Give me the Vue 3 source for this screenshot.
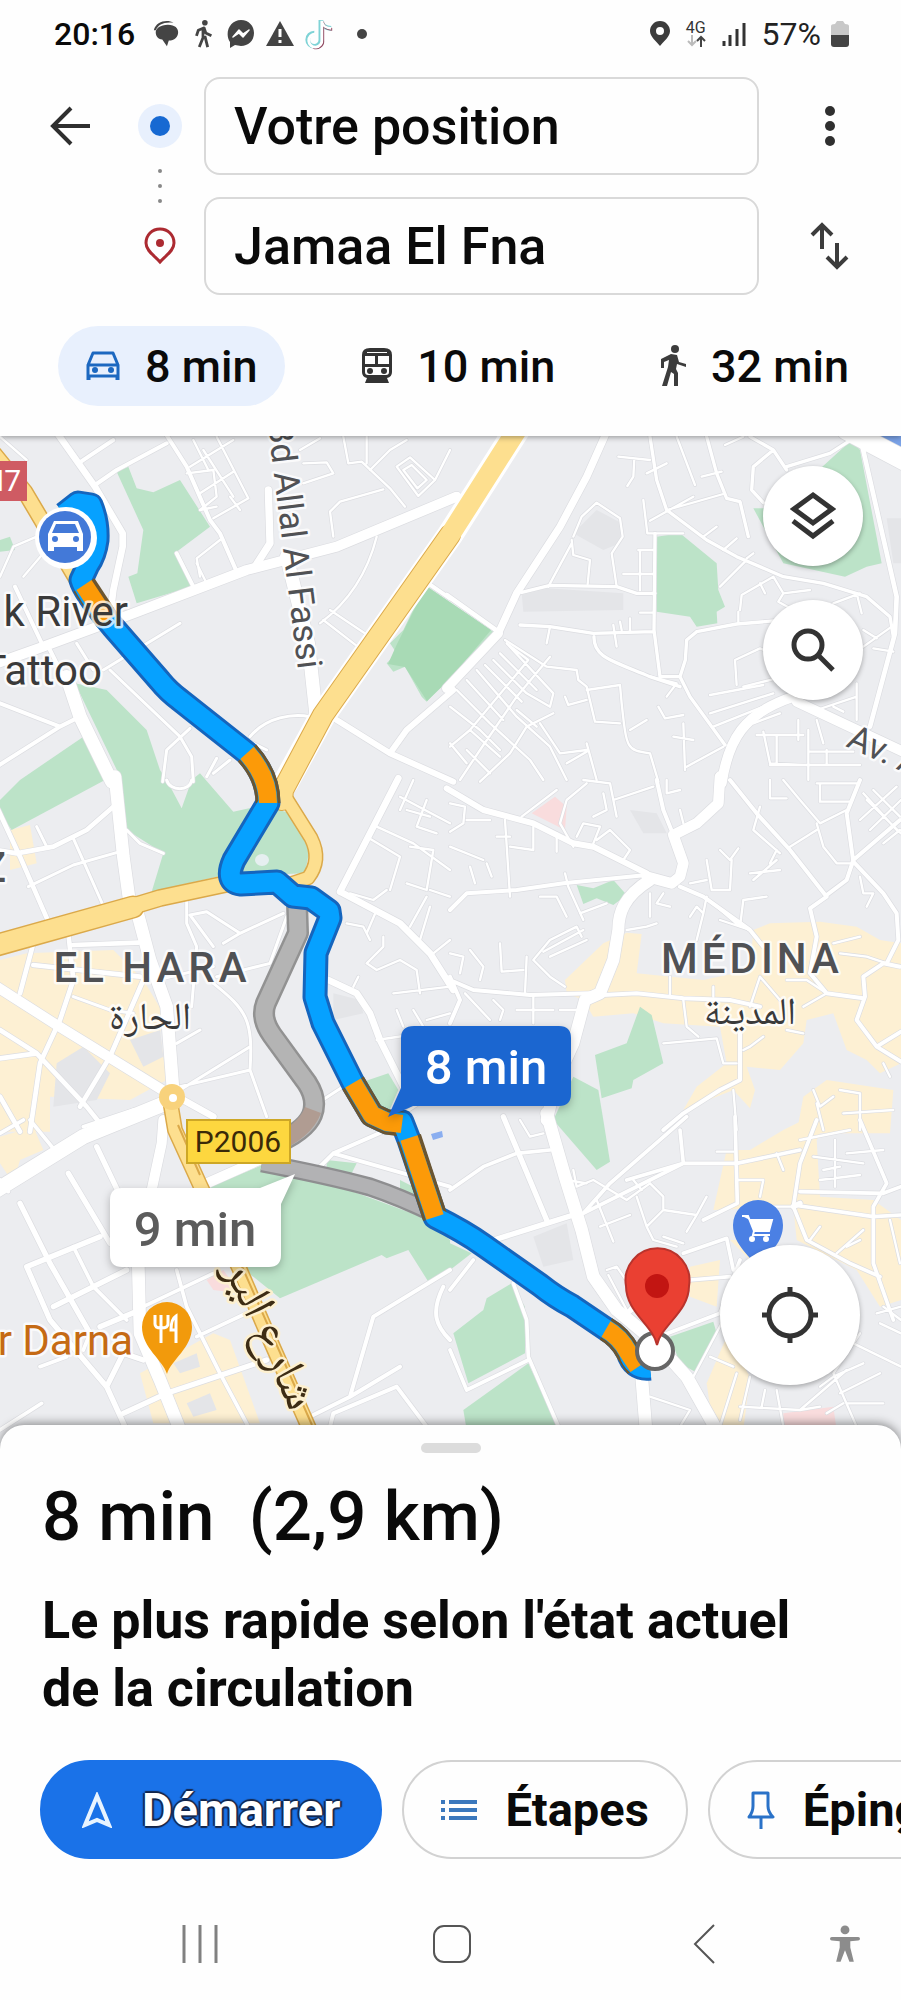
<script setup>
import { ref } from 'vue'

const origin = ref('Votre position')
const destination = ref('Jamaa El Fna')
const mode = ref('car')

const modes = [
  { id: 'car', time: '8 min' },
  { id: 'transit', time: '10 min' },
  { id: 'walk', time: '32 min' }
]

/* The base map is split in tiles, each drawn at three units per map pixel. */
const tiles = [
  {
    x: 0, y: 430,
    green: [
      'M350 125 L385 110 L410 175 L460 187 L540 150 L630 290 L530 365 L575 470 L410 520 L385 440 L412 430 L430 300 Z',
      'M1275 465 L1480 605 L1350 740 L1280 815 L1265 800 L1215 710 L1180 725 L1160 700 L1190 670 L1170 640 L1210 600 Z',
      'M0 330 L30 320 L45 360 L0 365 Z'
    ],
    sand: [], grey: [], red: [],
    roads: [
      [30, 'M-10 700 L130 650 L400 550 L740 420 L1010 350 L1370 200'],
      [20, 'M165 0 L285 170 L368 310 L368 350 L340 480 L330 560'],
      [40, 'M860 380 L925 640 L950 870 M200 740 L240 860 L335 1055'],
      [22, 'M805 180 L810 340 L765 410'],
      [18, 'M1010 870 L1170 970 L1360 1055 M1170 970 L1220 900 L1360 780'],
      [12, 'M285 165 L350 120 L500 40 M490 0 L560 110 L630 270 L660 310 L710 425 M1270 450 L1350 505 M45 470 L130 650 M0 820 L180 890 L240 860 M180 890 L-10 1010 M150 660 L205 770 M530 370 L580 470 M235 100 L340 30'],
      [7, 'M570 110 L700 30 M560 130 L640 120 L650 200 L600 240 M600 190 L700 125 M580 30 L625 120 M650 20 L745 205 L640 265 M690 200 L720 240 M600 240 L650 230 M610 60 L700 200 M910 100 L980 97 L1000 130 L910 160 M1030 20 L1045 100 L1085 95 L1170 175 L1215 230 M1100 20 L1100 100 M1000 320 L990 245 L1020 215 L1150 178 M1190 110 L1230 82 L1305 150 L1255 198 Z M1210 120 L1235 105 L1280 150 L1252 175 Z M1110 120 L1170 60 L1220 30 M1305 150 L1350 60 M1130 320 C1100 440 1040 520 960 580 M990 540 L1110 620 M970 570 L1080 655 M0 440 L40 350 L110 320 M70 440 L130 370 M0 20 L80 90 M900 60 L960 25 M600 440 L590 385 L660 330 M590 400 L615 450'],
      [9, 'M230 640 L280 720 M330 720 L540 920 L575 980 L580 1055 M310 720 L540 580 M570 895 L500 960 L488 1055 M750 920 C800 860 880 850 930 860 M620 1040 L650 985 M640 1030 L690 990 M740 930 L800 960']
    ]
  },
  {
    x: 450, y: 430,
    green: [
      'M620 320 L690 310 L800 400 L805 480 L825 530 L800 545 L802 580 L740 590 L720 560 L620 545 Z',
      'M910 235 L980 235 L1205 30 L1230 60 L1295 400 L1250 410 L1185 440 L1000 400 Z'
    ],
    sand: [],
    grey: ['M370 310 L440 240 L515 280 L510 340 L460 360 Z', 'M215 490 L290 475 L520 490 L520 540 L220 545 Z', 'M1310 265 L1353 265 L1353 400 L1330 400 Z'],
    red: [],
    roads: [
      [22, 'M468 10 L410 140 L330 290 L200 490 L145 610'],
      [28, 'M145 610 L-10 775'],
      [14, 'M-10 495 L145 605 M1235 40 L1340 500 M1340 500 L1335 610 L1260 890'],
      [60, 'M1190 0 L1370 95'],
      [30, 'M1030 800 C880 850 835 930 815 1060 M1040 815 L1370 970'],
      [10, 'M600 20 L620 150 L650 240 L770 330 L860 380 L1000 440 L1120 460 L1250 500 L1320 560 L1330 620 M770 20 L800 130 L830 205 L870 215 L895 320 M970 60 L910 110 L905 180 L940 218 M900 20 L970 60 L1010 120 M1010 110 L1140 70 L1210 25 M615 310 L612 600 L630 740 L690 740 M215 487 L300 466 L500 470 L560 490 L615 490 M210 585 L300 590 L430 610 L610 605 M740 605 L860 582 L980 572 M740 605 L710 630 L706 690 L690 740 L720 800 L825 945 M432 620 C430 680 480 690 600 740 L690 770'],
      [7, 'M680 20 L735 165 M505 80 L600 90 M553 85 L550 140 L532 168 M590 130 L650 100 M580 210 L592 310 L700 310 M600 272 L730 200 M650 240 L820 192 M755 140 L815 125 M825 45 L880 20 M370 375 L365 330 M370 320 L395 260 L440 218 L510 265 L518 320 L485 370 L500 470 M370 375 L420 390 L413 462 M295 470 L365 340 M565 360 H615 M570 360 V480 M520 432 H612 M570 548 H610 M490 585 L500 650 M510 575 L515 600 M540 565 V605 M760 320 L800 290 M820 360 L860 325 M890 385 L910 370 M810 470 L885 395 M870 540 L875 495 L970 440 L1000 490 L985 515 L1030 540 M865 580 V545 M930 460 L945 490 M1000 490 L1080 480 M1220 490 L1235 550 M1150 520 L1230 490 M165 630 L290 710 L380 720 L385 750 L410 770 L435 875 L510 880 M410 780 L510 765 L515 820 C530 960 530 960 600 970 L625 1055 M345 800 L355 825 L410 810 M540 900 L590 870 M625 830 L645 865 L700 855 M780 850 L970 790 M790 890 L940 830 M860 765 L855 690 L930 655 L990 680 M780 795 L940 765 M880 770 L980 745 M700 880 L705 1020 M670 920 L730 930 M710 1010 L820 950 M600 740 L680 760 L650 800 M910 880 L990 850 M920 915 H1060 M940 905 L960 1000 L1060 1005 M980 915 V1000 M1045 870 V930 M1075 900 V1050 M1080 965 H1210 M960 1005 H1230 M1100 870 L1120 940 M1130 960 V1005 M1240 650 L1325 590 M1240 600 L1280 625 M1270 655 L1330 665 M1220 760 V870 M1100 840 L1220 800 M1150 830 L1180 845 M300 590 L290 640'],
      [7, 'M130 690 L230 790 L300 830 L310 790 L170 640 M80 720 L200 860 L300 950 L350 1050 M20 780 L120 880 L240 990 L280 1050 M0 830 L90 900 L150 960 M50 750 L160 870 M105 705 L215 815 M150 670 L260 780 M170 640 L235 690 L60 900 L0 950 M300 680 L200 800 L90 960 L30 1050 M310 850 L230 890 L180 970 L90 1055 M270 880 L330 970 L410 960 M0 940 L50 1000 M60 900 L150 980 M50 960 L120 1030 M200 840 L260 890 M410 940 L440 1050 M350 1000 L410 965']
    ]
  },
  {
    x: 0, y: 780,
    green: [
      'M0 60 L60 0 L250 -130 L315 0 L35 150 L0 100 Z',
      'M225 -290 L320 -270 L440 -150 L480 -30 L500 0 L545 85 L575 0 L600 -20 L700 95 L790 75 L870 100 L930 200 L915 280 L650 290 L455 335 L490 220 L380 150 L365 0 Z',
      'M1090 905 L1165 880 L1195 930 L1160 1010 Z'
    ],
    sand: [
      'M0 540 L80 520 L340 510 L430 600 L490 700 L480 760 L500 900 L390 960 L150 950 L150 1055 H0 Z',
      'M30 150 L90 135 L110 250 L30 270 Z'
    ],
    grey: ['M170 850 L250 800 L330 880 L290 960 L160 980 Z', 'M390 780 L480 750 L490 830 L430 860 Z', 'M1000 640 L1080 660 L1090 700 L1000 720 Z'],
    red: [],
    roads: [
      [38, 'M345 -10 L370 230 L390 375 M410 390 L450 540 L500 680 L520 940'],
      [45, 'M520 960 L250 1070 L-10 1230'],
      [30, 'M-10 620 L170 735 L520 950'],
      [20, 'M550 960 L640 1010 M1195 -5 L1020 335 M1020 335 L1200 430 L1290 520 L1360 630 M985 600 L1070 640 L1110 700 L1140 780 L1215 930'],
      [14, 'M-5 90 L60 230 L145 425 M0 212 L50 220 L160 200 L260 150 L340 80 M100 490 L60 640 M205 460 L220 600 L180 720 L120 850 L90 1055 M430 600 L330 830 L240 980 M0 750 L110 820 L260 980 L320 1055 M0 835 L110 820 M0 950 L60 1055 M220 495 L415 488 M100 555 L420 590'],
      [9, 'M220 175 L310 378 M85 320 L220 255 L360 215 M110 140 L140 200 M380 150 L420 190 L490 220 M220 650 L330 690 L400 700 M560 350 L560 430 L590 500 L575 680 M570 405 L620 395 L720 460 L850 400 M570 405 L640 500 M720 460 L670 490 M860 410 L810 550 L650 590 M640 610 C740 690 760 720 750 870 L800 1010 M540 930 L750 800 M540 920 L750 870 M530 790 L600 750 M960 965 L1060 900 M1180 1020 L1350 910 M500 0 C510 35 570 35 575 0 M470 600 L640 560'],
      [7, 'M1200 50 L1350 130 M1130 140 L1240 190 L1350 270 M1240 0 L1200 90 M1280 60 L1250 140 L1310 160 M1100 170 L1200 230 L1170 330 M1230 200 L1300 210 L1280 330 L1220 310 M1290 330 L1350 350 M1220 90 L1290 110 M1050 340 L1120 360 L1160 330 M1040 430 L1090 440 L1110 480 M1100 460 L1130 390 M1150 470 L1150 500 L1100 550 L1130 570 L1200 540 L1250 570 L1260 640 M1180 640 L1350 620 M1130 780 L1230 765 M1190 690 L1210 740 M1240 690 L1270 740 M1280 720 L1350 700 M1060 620 L1075 590 M1290 380 L1260 480 M1230 440 L1280 350 M1300 520 L1350 480']
    ]
  },
  {
    x: 450, y: 780,
    green: [
      'M380 315 L430 325 L490 300 L530 345 L490 375 L440 355 L400 372 Z',
      'M435 825 L530 790 L570 680 L605 705 L640 850 L550 900 L545 925 L455 955 Z',
      'M370 890 L445 930 L460 1020 L480 1145 L440 1170 L310 1020 Z'
    ],
    sand: [
      'M345 600 L460 490 L530 458 L575 462 L560 580 L760 600 L900 570 L910 450 L960 430 L1110 425 L1220 440 L1290 480 L1353 490 V850 L1290 880 L1250 840 L1190 810 L1150 700 L1070 720 L1060 790 L990 870 L890 860 L915 930 L900 985 L850 930 L700 990 L740 920 L830 850 L810 740 L640 730 L550 700 L430 710 L400 660 L350 640 Z',
      'M1060 950 L1130 900 L1330 930 L1320 1060 L1040 1060 Z'
    ],
    grey: ['M540 90 L620 100 L650 160 L580 160 Z'],
    red: ['M245 100 L315 50 L350 80 L345 150 Z'],
    roads: [
      [32, 'M810 -10 L805 70 L740 130 L670 165 L700 250 L690 290 L665 310 L590 290'],
      [36, 'M600 300 C520 350 505 400 505 450 L490 540 L450 640 L405 660 L370 790 L320 900 L290 1020'],
      [18, 'M-10 25 L100 90 L250 130 L370 190 L430 200 L590 280'],
      [12, 'M0 390 L50 340 L200 330 L340 310 L590 285 M690 320 L760 350 L900 450 L940 500 M0 600 L70 630 L240 645 L420 640 M460 645 L560 640 L700 655 L840 660 L930 680 M0 590 L30 660 L0 730 M620 0 L640 90 L670 165 M840 0 L920 100 L1020 210 L1130 350 L1080 385 L1100 470 L1080 580 L1130 640 L1240 655 M1130 345 L1190 300 L1210 240 L1350 120 M1210 245 L1190 100 L1230 0 M1210 245 L1300 340 L1340 400 L1345 480 L1310 550 M1350 560 L1300 550 L1240 590 L1245 650 L1220 720 L1280 800 L1353 755 M1280 800 L1353 845 M870 760 L870 900 L810 930 L700 1000 L640 1050'],
      [7, 'M370 200 L330 130 L350 60 L410 10 M215 110 L320 30 M165 120 L180 350 M180 200 L250 210 L250 140 M140 170 H180 M320 160 V215 M50 120 H120 M0 70 L45 80 L40 130 L0 155 M0 200 L100 240 M60 260 L75 310 M110 250 L125 290 M270 350 L320 350 L350 410 M345 280 L355 320 L400 420 M250 540 L300 590 L345 620 M250 540 L300 480 L380 440 L395 470 M230 530 L225 640 M150 490 L155 575 L220 570 M390 400 L470 370 M300 530 L410 480 M280 515 L400 450 M530 450 L590 440 L620 430 M600 340 V410 M640 340 L620 370 L660 380 M740 480 L760 400 L770 350 M720 410 L740 380 L760 400 M770 240 L785 330 L840 330 L845 240 M810 210 L840 240 L865 205 M720 310 L770 300 M800 380 L870 440 L880 360 L950 350 M810 420 L900 450 M900 280 L990 270 M910 300 L980 240 M930 80 L910 150 L990 220 M980 210 L960 250 M1100 130 L1120 200 L1160 250 H1210 M1000 0 L1050 60 L1110 130 L1190 90 M1020 200 L1100 150 M960 0 V55 H1010 M1250 60 L1353 160 M1100 10 H1220 M1110 10 V65 H1200 M1240 40 L1340 150 M1270 30 L1350 110 M1230 120 L1340 20 M1260 150 L1353 60 M1300 190 L1350 150 M1230 290 L1240 340 L1270 340 L1250 380 M1170 520 L1250 530 L1310 550 M1150 490 L1230 470 M1300 850 L1320 890 M930 590 L900 680 M930 590 L990 660 M1010 600 L1070 600 L1130 640 L1060 680 M640 790 L800 775 L820 850 L860 850 M700 660 L710 740 L745 770 M660 590 V650 M790 620 V650 M880 810 L900 800 L940 770 M850 930 L860 1050 M1100 970 L1120 1050 M1090 930 L1110 980 L1150 950 M1170 930 L1230 940 L1230 1050 M1180 1000 L1330 990 M250 645 V730 M200 690 H310 M130 660 L160 690 L150 720 M330 690 H410 M45 640 L120 720 M0 520 L40 530 L30 580 M60 510 L100 560 L90 600 M380 170 L400 130 L450 140 L430 190 M430 110 L470 90 L460 40 M440 180 L480 150 L540 210 L520 240 M400 0 L480 10 L500 110 M490 60 L610 20 M650 0 V40 L690 30 M700 130 L690 90 M1010 750 L1060 760']
    ]
  },
  {
    x: 0, y: 1120,
    green: [
      'M630 200 L800 130 L1020 200 L1290 300 L1350 360 V450 L1285 485 L1225 390 L1160 415 L1145 405 L840 535 L760 470 L700 430 Z',
      'M980 120 L1070 130 L1050 170 L980 150 Z',
      'M1200 180 L1240 200 L1250 240 L1200 215 Z'
    ],
    sand: ['M0 50 L100 20 L130 90 L60 120 L40 190 L0 130 Z', 'M420 760 L640 640 L690 660 L780 910 L460 910 Z'],
    grey: ['M520 730 L590 700 L600 740 L540 760 Z', 'M560 850 L630 820 L650 870 L580 890 Z'],
    red: ['M620 480 L670 450 L720 520 L640 510 Z'],
    roads: [
      [38, 'M415 440 L420 640 L480 780 L540 930'],
      [30, 'M490 0 L485 70 L455 210 M620 190 L800 110'],
      [16, 'M205 160 L330 370 M290 80 L400 310 M60 250 L150 430 L270 640 M80 440 L300 350 M80 440 L150 600 L320 800 L375 920 M160 560 L380 450 M300 620 L420 570 M320 800 L370 700 L430 720 M370 880 L500 820 L800 720'],
      [11, 'M90 0 L180 110 M0 40 L70 0 M220 380 L280 500 L380 600 M530 450 L560 560 L660 760 L745 920 M430 560 L640 460 M590 650 L760 570 M120 740 L200 710 M125 850 L0 930 M0 180 L25 215 M250 20 L400 -30 M270 640 L250 690'],
      [12, 'M1350 450 L1120 590 L1050 830 L940 885 M990 920 L1000 880 L1190 800 L1280 920 M1050 830 L1200 740 M1330 500 C1290 580 1310 620 1350 660 M950 150 L1000 100 L1160 30 M1000 100 L1350 200']
    ]
  },
  {
    x: 450, y: 1120,
    green: [
      'M10 640 L100 570 L110 535 L185 490 L225 560 V700 L55 790 Z',
      'M40 870 L235 730 L330 930 H50 Z',
      'M660 650 L790 605 L800 640 L735 755 L690 730 Z',
      'M0 370 L65 400 L0 450 Z'
    ],
    sand: [
      'M790 270 L830 90 L900 90 L1000 30 L1060 0 L1130 0 L1100 60 L1110 230 L1270 240 L1353 300 L1353 540 L1290 560 L1220 450 L1040 360 L1030 260 Z',
      'M720 440 L810 420 L800 560 L720 530 Z',
      'M770 790 L830 650 L900 770 L880 930 L790 930 Z',
      'M840 360 H940 L900 420 Z'
    ],
    grey: ['M250 350 L350 310 L370 420 L280 440 Z'],
    red: ['M1000 880 L1150 860 L1160 930 H1000 Z'],
    roads: [
      [38, 'M290 -20 L345 170 L395 330 L430 470 L500 570 L620 670 L710 770 L800 930 M575 770 L588 930'],
      [16, 'M160 -10 L290 300 M100 370 L290 310 L370 285 M1050 250 L1030 260'],
      [11, 'M0 210 L100 140 L200 100 L300 90 M400 280 L480 190 L710 -10 M690 30 L700 130 M530 180 L700 130 L860 130 L1050 90 M400 280 L600 180 L700 130 M855 -10 L862 250 L760 300 M190 490 L230 600 L235 710 L330 930 M0 690 L50 810 L235 720 M0 510 L70 420 M520 590 L640 500 L720 480 L840 470 M640 645 L810 580 L870 420 M700 400 L830 355 L850 450 M1100 0 L1050 130 L1030 260 L1070 360 L1200 430 L1290 470 M1230 0 L1310 190 L1270 260 L1270 430 L1330 600 M1030 255 L1270 290 L1353 285 M1050 215 L1300 220 L1353 200'],
      [7, 'M210 0 L240 50 L280 40 M370 150 L380 200 L430 180 L530 240 L600 190 M350 180 L410 190 M440 240 L490 365 M450 320 L540 285 M560 230 L590 320 L640 270 L740 285 L710 335 M600 190 L640 230 L640 270 M590 320 L610 360 L680 380 M640 350 L700 370 M470 450 L500 440 L570 540 M475 465 L530 570 M550 180 L575 210 M740 285 L770 230 M820 600 L730 770 M780 710 L850 740 M860 760 L810 920 M945 810 L935 860 M870 860 L1050 870 L1190 750 M980 810 L1000 920 M900 770 L870 900 M1230 640 L1150 760 L1220 920 M1210 670 L1353 740 M1150 770 L1240 730 M1170 820 L1290 760 M1190 850 L1300 850 M1130 880 L1180 850 M1050 60 L1200 30 M1090 110 L1240 130 M1110 180 L1230 165 M1155 60 V200 M1120 150 L1170 140 M1190 100 L1300 90 M970 260 H1030 M860 180 L940 180 L930 230 M800 95 H850 M980 100 L1000 150 M1320 300 L1350 430 M1080 360 L1110 320 M1160 400 L1240 330 M1190 380 L1230 360 M1300 560 L1353 600 M1290 610 L1353 640 M1280 580 L1353 560 M560 540 L520 590 M600 830 L720 870 L690 920 M1050 870 L1110 860 M1110 800 L1150 770']
    ]
  }
]

const route = 'M64 514 L78 503 L91 505 Q98 522 97 540 Q95 555 88 565 L81 580 Q84 592 113 627 L160 681 Q168 691 180 700 L247 753 Q268 776 268 803 L234 860 Q224 882 241 884 L277 882 L293 896 L311 898 L329 911 L330 918 L316 953 L315 997 L323 1023 L353 1083 L372 1115 L387 1122 L402 1122 L409 1140 L435 1217 Q465 1232 483 1245 L540 1285 Q555 1297 572 1306 L606 1329 Q620 1337 628 1352 Q633 1370 650 1368'
const slowParts = [
  'M84 585 L107 620',
  'M247 753 Q268 776 268 803',
  'M353 1083 L372 1115 L387 1122 L402 1124',
  'M409 1138 L435 1217',
  'M606 1329 Q620 1337 628 1352 L638 1367'
]
const altRoute = 'M297 903 L298 933 L266 1003 Q260 1018 272 1035 L307 1083 Q318 1100 312 1115 Q305 1132 270 1146'
const altRoute2 = 'M262 1163 Q330 1176 370 1187 Q400 1197 435 1214'
</script>

<template>
  <main class="phone">
    <header class="top">
      <div class="status">
        <div class="status-side">
          <span class="clock">20:16</span>
          <svg class="s-icon" viewBox="0 0 30 30" aria-hidden="true"><path d="M2 11C4 1 17 -1 23 3C12 2 7 5 4 11Z" fill="#444" /><path d="M17 5C25 5 28 9 28 13C28 18 24 22 18 22L16 28L11 21C6 20 4 17 4 13C4 9 9 5 17 5Z" fill="#444" /></svg>
          <svg class="s-icon" viewBox="0 0 30 32" aria-hidden="true"><circle cx="17" cy="4" r="3" fill="#444" /><path d="M17 9L10 12L8 18M16 9L18 15L24 18M15 11L15 20L11 30M17 18L20 30" stroke="#444" stroke-width="3" fill="none" stroke-linejoin="round" /></svg>
          <svg class="s-icon wide" viewBox="0 0 30 30" aria-hidden="true"><path d="M15 1C23 1 28 7 28 14C28 22 22 27 15 27L9 26L4 29L4 23C-2 14 4 1 15 1Z" fill="#444" /><path d="M7 18L13 11L17 15L23 11L17 18L13 14Z" fill="#fff" stroke="#fff" stroke-width="1.5" stroke-linejoin="round" /></svg>
          <svg class="s-icon wide" viewBox="0 0 30 30" aria-hidden="true"><path d="M15 2L29 27H1Z" fill="#444" /><path d="M15 10V18M15 21V24" stroke="#fff" stroke-width="3" /></svg>
          <svg class="s-icon wide" viewBox="0 0 30 34" aria-hidden="true"><g fill="none" stroke-width="5"><path d="M17 2V23A7 7 0 1 1 10 16M17 3C18 8 22 11 28 11" stroke="#7fd3d6" /><path d="M19 4V24A7 7 0 0 1 9 31M19 6C21 10 24 12 29 12" stroke="#8f4860" stroke-width="3" /><path d="M18 3V23A7 7 0 1 1 11 17M18 4C19 8 23 11 28 11" stroke="#fff" stroke-width="3" /></g></svg>
          <span class="more-dot"></span>
        </div>
        <div class="status-side right">
          <svg class="loc" viewBox="0 0 20 26" aria-hidden="true"><path fill-rule="evenodd" d="M10 0C16 0 20 5 20 10C20 16 13 21 10 25C7 21 0 16 0 10C0 5 4 0 10 0ZM10 6A4 4 0 1 0 10 14A4 4 0 1 0 10 6Z" fill="#3c3c3c" /></svg>
          <span class="net"><span>4G</span>
            <svg viewBox="0 0 20 12" width="20" height="12" aria-hidden="true"><path d="M6 0V10M2 6L6 10L10 6" stroke="#bbb" stroke-width="2" fill="none" /><path d="M15 12V2M11 6L15 2L19 6" stroke="#444" stroke-width="2" fill="none" /></svg>
          </span>
          <svg class="bars" viewBox="0 0 24 24" aria-hidden="true"><path d="M2 19V24M8 13V24M15 7V24M22 1V24" stroke="#333" stroke-width="3" /></svg>
          <span class="battery-text">57%</span>
          <svg class="battery" viewBox="0 0 18 26" aria-hidden="true"><path d="M0 5Q0 3 4 3L6 0H12L14 3Q18 3 18 5V14H0Z" fill="#c8c8c8" /><path d="M0 14H18V23Q18 26 15 26H3Q0 26 0 23Z" fill="#444" /></svg>
        </div>
      </div>

      <form class="trip" @submit.prevent>
        <button type="button" class="icon-btn back" aria-label="Retour">
          <svg width="40" height="40" viewBox="0 0 40 40"><path d="M40 20H3M21 2L3 20L21 38" fill="none" stroke="#2f2f2f" stroke-width="4" /></svg>
        </button>
        <svg class="here" width="44" height="44" viewBox="0 0 44 44" aria-hidden="true"><circle cx="22" cy="22" r="22" fill="#e8f0fd" /><circle cx="22" cy="22" r="10" fill="#1769d2" /></svg>
        <input v-model="origin" class="place" type="text" aria-label="Point de départ">
        <button type="button" class="icon-btn" aria-label="Plus d'options">
          <svg width="12" height="42" viewBox="0 0 12 42"><g fill="#2f2f2f"><circle cx="6" cy="6" r="5" /><circle cx="6" cy="21" r="5" /><circle cx="6" cy="36" r="5" /></g></svg>
        </button>
        <svg class="dots" width="6" height="36" viewBox="0 0 6 36" aria-hidden="true"><g fill="#888"><circle cx="3" cy="3" r="2" /><circle cx="3" cy="18" r="2" /><circle cx="3" cy="33" r="2" /></g></svg>
        <svg class="goal" width="32" height="38" viewBox="0 0 32 38" aria-hidden="true"><path d="M16 2C24 2 30 8 30 16C30 24 21 29 16 35C11 29 2 24 2 16C2 8 8 2 16 2Z" fill="none" stroke="#ac2a31" stroke-width="3" /><circle cx="16" cy="16" r="4" fill="#ac2a31" /></svg>
        <input v-model="destination" class="place" type="text" aria-label="Destination">
        <button type="button" class="icon-btn" aria-label="Inverser les adresses">
          <svg width="40" height="50" viewBox="0 0 40 50"><path d="M12 28V4M2 14L12 4L22 14M27 22V46M17 36L27 46L37 36" fill="none" stroke="#3c3c3c" stroke-width="4" /></svg>
        </button>
      </form>

      <nav class="modes" aria-label="Moyen de transport">
        <button v-for="m in modes" :key="m.id" type="button" class="mode" :class="{ active: mode === m.id }" @click="mode = m.id">
          <svg v-if="m.id === 'car'" width="34" height="30" viewBox="0 0 34 30" aria-hidden="true"><path d="M2 29V14L7 2H27L32 14V29M2 14H32M2 25H32M3 26V29M31 26V29" fill="none" stroke="#1c68c0" stroke-width="3" stroke-linejoin="round" /><circle cx="9" cy="19" r="3" fill="#1c68c0" /><circle cx="25" cy="19" r="3" fill="#1c68c0" /></svg>
          <svg v-else-if="m.id === 'transit'" width="30" height="36" viewBox="0 0 30 36" aria-hidden="true"><path fill-rule="evenodd" d="M8 0H22Q30 0 30 7V24Q30 29 25 30L27 35H3L5 30Q0 29 0 24V7Q0 0 8 0ZM3 8V16H13V8ZM16 8V16H27V8ZM3 19V24Q3 27 6 27H24Q27 27 27 24V19ZM5 4V5H25V4Z" fill="#333" /><circle cx="8" cy="23" r="3" fill="#333" /><circle cx="22" cy="23" r="3" fill="#333" /></svg>
          <svg v-else width="26" height="42" viewBox="0 0 26 42" aria-hidden="true"><circle cx="15" cy="4" r="4" fill="#3c3c3c" /><path d="M11 9L17 10L19 17L26 19V22L17 19L16 24L18 28V41H14V29L11 27L7 41H2L8 22L9 15L4 17V23H1V14Z" fill="#3c3c3c" /></svg>
          <span>{{ m.time }}</span>
        </button>
      </nav>
    </header>

    <section class="map" aria-label="Carte de l'itinéraire">
      <svg class="canvas" viewBox="0 436 901 1014">
        <rect x="0" y="436" width="901" height="1014" fill="#ecedf0" />
        <g v-for="(t, i) in tiles" :key="'a' + i" :transform="`translate(${t.x} ${t.y}) scale(.33333)`">
          <path v-for="d in t.sand" :key="d" :d="d" fill="#fdf0d3" />
          <path v-for="d in t.grey" :key="d" :d="d" fill="#e4e5e8" />
          <path v-for="d in t.red" :key="d" :d="d" fill="#f9dcdd" />
          <path v-for="d in t.green" :key="d" :d="d" fill="#bce3c8" />
        </g>
        <path d="M426 586 L491 630 L450 679 L427 701 L405 667 L388 664 L397 644 L404 630 Z" fill="#a8dab5" />
        <path d="M878 436 H901 V450 Z" fill="#7ba3e8" />
        <g v-for="(t, i) in tiles" :key="'c' + i" :transform="`translate(${t.x} ${t.y}) scale(.33333)`" class="lines">
          <path v-for="r in t.roads" :key="r[1]" :d="r[1]" stroke="#dcdde1" :stroke-width="r[0] + 4" />
        </g>
        <g v-for="(t, i) in tiles" :key="'r' + i" :transform="`translate(${t.x} ${t.y}) scale(.33333)`" class="lines">
          <path v-for="r in t.roads" :key="r[1]" :d="r[1]" stroke="#fff" :stroke-width="r[0]" />
        </g>

        <g class="lines">
          <path d="M520 425 L450 535 L323 715 L286 782" stroke="#fff" stroke-width="26" />
          <g stroke="#dba94a">
            <path d="M450 535 L323 715 L283 790 L282 800" stroke-width="22" />
            <path d="M284 795 L311 838 Q322 860 308 878 L290 884" stroke-width="15" />
            <path d="M-10 947 L133 907" stroke-width="23" />
            <path d="M120 910 L160 898 L235 882" stroke-width="18" />
            <path d="M-5 455 L25 492 L80 585" stroke-width="17" />
            <path d="M170 1100 L175 1130 L200 1185 L240 1270 L270 1340 L312 1435" stroke-width="16" />
          </g>
          <g stroke="#fddf8f">
            <path d="M520 425 L450 535 L323 715 L283 790 L282 800" stroke-width="20" />
            <path d="M284 795 L311 838 Q322 860 308 878 L290 884" stroke-width="12" />
            <path d="M-10 947 L133 907" stroke-width="20" />
            <path d="M120 910 L160 898 L235 882" stroke-width="15" />
            <path d="M-5 455 L25 492 L80 585" stroke-width="14" />
            <path d="M170 1100 L175 1130 L200 1185 L240 1270 L270 1340 L312 1435" stroke-width="13" />
          </g>
        </g>
        <circle cx="172" cy="1097" r="13" fill="#f8d27c" /><circle cx="173" cy="1098" r="4" fill="#fff" />
        <path d="M178 1125 L200 1175 M240 1262 L312 1425" stroke="#dba94a" stroke-width="2" fill="none" />
        <path d="M431 1134 L442 1131 L443 1137 L433 1140 Z" fill="#8aaef0" />
        <ellipse cx="262" cy="860" rx="7" ry="6" fill="#e6eff0" />

        <g class="flat">
          <path :d="altRoute" stroke="#929292" stroke-width="22" />
          <path :d="altRoute" stroke="#b4b4b4" stroke-width="17" />
          <path d="M313 1110 Q305 1132 270 1146" stroke="#b09c92" stroke-width="17" />
          <path :d="altRoute2" stroke="#8e8e90" stroke-width="19" />
          <path :d="altRoute2" stroke="#b2b2b4" stroke-width="14" />
          <path :d="route" stroke="#1565bd" stroke-width="25" />
          <path v-for="d in slowParts" :key="d" :d="d" stroke="#6b5530" stroke-width="25" />
          <path :d="route" stroke="#06a1ff" stroke-width="19" />
          <path v-for="d in slowParts" :key="'s' + d" :d="d" stroke="#fc9a08" stroke-width="18" />
        </g>

        <g class="label">
          <text x="128" y="626" text-anchor="end" class="poi">k River</text>
          <text x="102" y="685" text-anchor="end" class="poi">Tattoo</text>
          <text x="133" y="1355" text-anchor="end" class="poi food">r Darna</text>
          <text x="10" y="882" text-anchor="end" class="district">Z</text>
          <text x="152" y="982" text-anchor="middle" class="district">EL HARA</text>
          <text x="752" y="973" text-anchor="middle" class="district">MÉDINA</text>
          <text x="150" y="1029" text-anchor="middle" class="arabic">الحارة</text>
          <text x="750" y="1024" text-anchor="middle" class="arabic">المدينة</text>
          <text transform="translate(298 670) rotate(83)" text-anchor="end" class="street">Bd Allal Al Fassi</text>
          <text transform="translate(845 746) rotate(24)" class="street">Av. A</text>
          <text transform="translate(257 1340) rotate(65)" text-anchor="middle" class="arabic road">شارع الير</text>
        </g>

        <rect x="-20" y="461" width="47" height="40" fill="#cf5b63" />
        <text x="21" y="491" text-anchor="end" class="shield white">N7</text>
        <rect x="187" y="1120" width="103" height="43" fill="#fdd73f" stroke="#cda726" stroke-width="2" />
        <text x="238" y="1152" text-anchor="middle" class="shield">P2006</text>

        <g class="bubble">
          <path d="M122 1188 H260 L295 1174 L281 1204 V1255 Q281 1267 269 1267 H122 Q110 1267 110 1255 V1200 Q110 1188 122 1188 Z" fill="#fff" />
          <text x="195" y="1246" text-anchor="middle" class="time">9 min</text>
          <path d="M414 1026 H559 Q571 1026 571 1038 V1094 Q571 1106 559 1106 H413 L388 1117 L401 1088 V1038 Q401 1026 414 1026 Z" fill="#1b66d0" />
          <text x="486" y="1084" text-anchor="middle" class="time white">8 min</text>
        </g>

        <circle cx="66" cy="538" r="31" fill="#fff" /><circle cx="65" cy="537" r="26" fill="#4379d8" />
        <path fill-rule="evenodd" d="M48 551V534L54 521H78L83 534V551H77V547H54V551ZM52 533H79L75 524H56Z" fill="#fff" />
        <circle cx="55" cy="539" r="3" fill="#4379d8" /><circle cx="76" cy="539" r="3" fill="#4379d8" />

        <path d="M167 1374C163 1360 142 1348 142 1327A25 25 0 1 1 192 1327C192 1348 171 1360 167 1374Z" fill="#f29a0c" />
        <path d="M155 1315V1324Q155 1328 161 1328Q168 1328 168 1324V1315M161 1315V1343M176 1343V1316Q171 1319 171 1330H176" fill="none" stroke="#fff" stroke-width="3" />

        <path d="M758 1270C752 1256 733 1246 733 1225A25 25 0 1 1 783 1225C783 1246 764 1256 758 1270Z" fill="#4b80e4" />
        <path d="M742 1216H748L754 1231H769L772 1220H750" fill="#fff" stroke="#fff" stroke-width="2" /><path d="M754 1231L753 1235H770" fill="none" stroke="#fff" stroke-width="2" />
        <circle cx="752" cy="1239" r="3" fill="#fff" /><circle cx="766" cy="1239" r="3" fill="#fff" />

        <circle cx="655" cy="1351" r="18" fill="#fff" stroke="#666" stroke-width="4" />
        <path d="M657 1345C653 1325 626 1312 626 1286A32 32 0 1 1 689 1286C689 1312 661 1325 657 1345Z" fill="#ea4032" stroke="#b9332c" stroke-width="2" />
        <circle cx="657" cy="1286" r="12" fill="#c21512" />
      </svg>

      <button type="button" class="fab layers" aria-label="Calques">
        <svg width="46" height="50" viewBox="0 0 46 50"><path d="M23 4L42 18L23 32L4 18ZM3 30L23 45L43 30" fill="none" stroke="#333" stroke-width="5" /></svg>
      </button>
      <button type="button" class="fab search" aria-label="Rechercher">
        <svg width="46" height="46" viewBox="0 0 46 46"><circle cx="18" cy="18" r="14" fill="none" stroke="#333" stroke-width="5" /><path d="M28 28L43 43" stroke="#333" stroke-width="5" /></svg>
      </button>
      <button type="button" class="fab locate" aria-label="Ma position">
        <svg width="56" height="56" viewBox="0 0 56 56"><circle cx="28" cy="28" r="21" fill="none" stroke="#333" stroke-width="5" /><path d="M28 0V8M28 48V56M0 28H8M48 28H56" stroke="#333" stroke-width="5" /></svg>
      </button>
    </section>

    <section class="sheet">
      <div class="handle"></div>
      <h1>8 min&nbsp; (2,9 km)</h1>
      <p>Le plus rapide selon l'état actuel de la circulation</p>
      <div class="actions">
        <button type="button" class="action primary">
          <svg width="30" height="36" viewBox="0 0 30 36" aria-hidden="true"><path d="M15 4L27 33L15 28L3 33Z" fill="none" stroke="#e8f4ff" stroke-width="4" /></svg>
          <span>Démarrer</span>
        </button>
        <button type="button" class="action">
          <svg width="36" height="22" viewBox="0 0 36 22" aria-hidden="true"><path d="M0 3H4M8 3H36M0 11H4M8 11H36M0 19H4M8 19H36" stroke="#3b78bd" stroke-width="4" /></svg>
          <span>Étapes</span>
        </button>
        <button type="button" class="action">
          <svg width="28" height="38" viewBox="0 0 28 38" aria-hidden="true"><path d="M6 2H21V15Q21 21 26 26H2Q6 21 6 15ZM14 26V38" fill="none" stroke="#2a72c8" stroke-width="3" stroke-linejoin="round" /></svg>
          <span>Épingler</span>
        </button>
      </div>
    </section>

    <nav class="system" aria-label="Navigation système">
      <button type="button" aria-label="Applications récentes"><svg width="38" height="38" viewBox="0 0 38 38"><path d="M3 0V38M19 0V38M35 0V38" stroke="#808080" stroke-width="3" /></svg></button>
      <button type="button" aria-label="Accueil"><svg width="38" height="38" viewBox="0 0 38 38"><rect x="1" y="1" width="36" height="36" rx="10" fill="none" stroke="#555" stroke-width="2" /></svg></button>
      <button type="button" aria-label="Précédent"><svg width="22" height="40" viewBox="0 0 22 40"><path d="M21 1L2 20L21 39" fill="none" stroke="#555" stroke-width="2" /></svg></button>
      <button type="button" aria-label="Accessibilité"><svg width="34" height="42" viewBox="0 0 34 42"><circle cx="17" cy="5" r="5" fill="#8c8c8c" /><path d="M2 13H32Q34 13 34 15Q34 17 32 17L23 18V25L27 41H22L17 28L12 41H7L11 25V18L2 17Q0 17 0 15Q0 13 2 13Z" fill="#8c8c8c" /></svg></button>
    </nav>
  </main>
</template>

<style>
body { margin: 0; background: #fefefe; }
</style>

<style scoped>
.phone {
  font-family: Roboto, "Liberation Sans", sans-serif;
  color: #0a0a0a;
  background: #fefefe;
  overflow: hidden;
}
button {
  font: inherit;
  color: inherit;
  background: none;
  border: 0;
  padding: 0;
  display: flex;
  align-items: center;
  justify-content: center;
}
.top {
  position: relative;
  z-index: 1;
  padding-bottom: 30px;
  background: #fefefe;
  box-shadow: 0 1px 6px rgba(0, 0, 0, .4);
}
.status {
  display: flex;
  justify-content: space-between;
  align-items: center;
  height: 67px;
  padding: 0 52px 0 54px;
}
.status-side { display: flex; align-items: center; gap: 9px; }
.status-side.right { gap: 16px; }
.clock { font-size: 32px; font-weight: 500; margin-right: 8px; }
.s-icon { width: 28px; height: 32px; }
.s-icon.wide { width: 30px; }
.more-dot { width: 10px; height: 10px; border-radius: 50%; background: #444; margin-left: 14px; }
.loc { width: 20px; height: 26px; }
.net { display: flex; flex-direction: column; align-items: center; font-size: 16px; line-height: 14px; color: #333; }
.bars { width: 24px; height: 24px; }
.battery-text { font-size: 32px; color: #222; }
.battery { width: 18px; height: 26px; margin-left: -6px; }

.trip {
  display: grid;
  grid-template-columns: 140px 40px 1fr 142px;
  grid-template-rows: 98px 98px;
  row-gap: 22px;
  align-items: center;
  justify-items: center;
  padding-top: 10px;
}
.icon-btn { width: 60px; height: 60px; }
.here, .goal, .dots { grid-column: 2; }
.here { grid-row: 1; }
.goal { grid-row: 2; }
.dots { grid-row: 1 / 3; }
.trip > .place {
  grid-column: 3;
  justify-self: stretch;
  box-sizing: border-box;
  min-width: 0;
  height: 98px;
  margin: 0 0 0 24px;
  padding: 0 28px;
  border: 2px solid #d9d9d9;
  border-radius: 16px;
  background: #fefefe;
  font: 500 52px Roboto, "Liberation Sans", sans-serif;
  color: #0a0a0a;
}
.back { grid-column: 1; grid-row: 1; }

.modes {
  display: flex;
  justify-content: space-between;
  padding: 31px 24px 0 58px;
}
.mode {
  height: 80px;
  padding: 0 28px;
  gap: 25px;
  border-radius: 40px;
  font-size: 45px;
  font-weight: 500;
}
.mode.active { background: #e8f0fd; }

.map { position: relative; }
.canvas { display: block; width: 100%; height: auto; }
.lines path { fill: none; stroke-linecap: round; stroke-linejoin: round; }
.flat path { fill: none; stroke-linejoin: round; }
.label text { paint-order: stroke; stroke: rgba(255, 255, 255, .75); stroke-width: 5px; stroke-linejoin: round; fill: #3a3a3a; }
.label .poi { font-size: 42px; }
.label .food { fill: #c56a14; }
.label .district { font-size: 42px; font-weight: 500; letter-spacing: 4px; fill: #505154; }
.label .street { font-size: 35px; fill: #505154; }
.label .arabic { font-family: "Noto Naskh Arabic", "DejaVu Sans", sans-serif; font-size: 38px; }
.label .road { font-size: 48px; fill: #3d2c14; stroke: #fdf0cf; }
.shield { font-size: 30px; fill: #3a2a08; }
.time { font-size: 49px; font-weight: 500; fill: #5c5c5c; }
.white { fill: #fff; }
.bubble path { filter: drop-shadow(0 3px 4px rgba(0, 0, 0, .25)); }

.fab {
  position: absolute;
  right: 38px;
  width: 100px;
  height: 100px;
  border-radius: 50%;
  background: #fff;
  box-shadow: 0 2px 5px rgba(0, 0, 0, .3);
}
.layers { top: 30px; }
.search { top: 164px; }
.locate { right: 41px; bottom: 65px; width: 140px; height: 140px; }

.sheet {
  position: relative;
  margin-top: -25px;
  padding-top: 18px;
  border-radius: 24px 24px 0 0;
  background: #fefefe;
  box-shadow: 0 -2px 10px rgba(0, 0, 0, .4);
}
.handle { width: 60px; height: 10px; margin: 0 auto; border-radius: 5px; background: #dcdcdc; }
h1 { margin: 20px 42px 0; font-size: 69px; line-height: 88px; font-weight: 500; }
p { margin: 26px 42px 0; font-size: 52px; line-height: 68px; font-weight: 700; }
.actions { display: flex; gap: 20px; margin-top: 37px; padding-left: 40px; overflow: hidden; }
.action {
  flex: none;
  box-sizing: border-box;
  height: 99px;
  padding: 0 37px;
  gap: 28px;
  border: 2px solid #d2d2d2;
  border-radius: 50px;
  font-size: 47px;
  font-weight: 700;
}
.primary {
  gap: 30px;
  padding: 0 40px;
  border-color: #1a72e8;
  background: #1a72e8;
  color: #fff;
  text-shadow: 2px 0 1px #14264a, -2px 0 1px #14264a, 0 2px 1px #14264a, 0 -2px 1px #14264a;
}

.system {
  position: relative;
  display: grid;
  grid-template-columns: 1fr 1fr 1fr 30px;
  align-items: center;
  height: 141px;
  padding: 0 41px 0 74px;
  background: #fefefe;
}
.system button { height: 60px; padding-top: 28px; }
</style>
